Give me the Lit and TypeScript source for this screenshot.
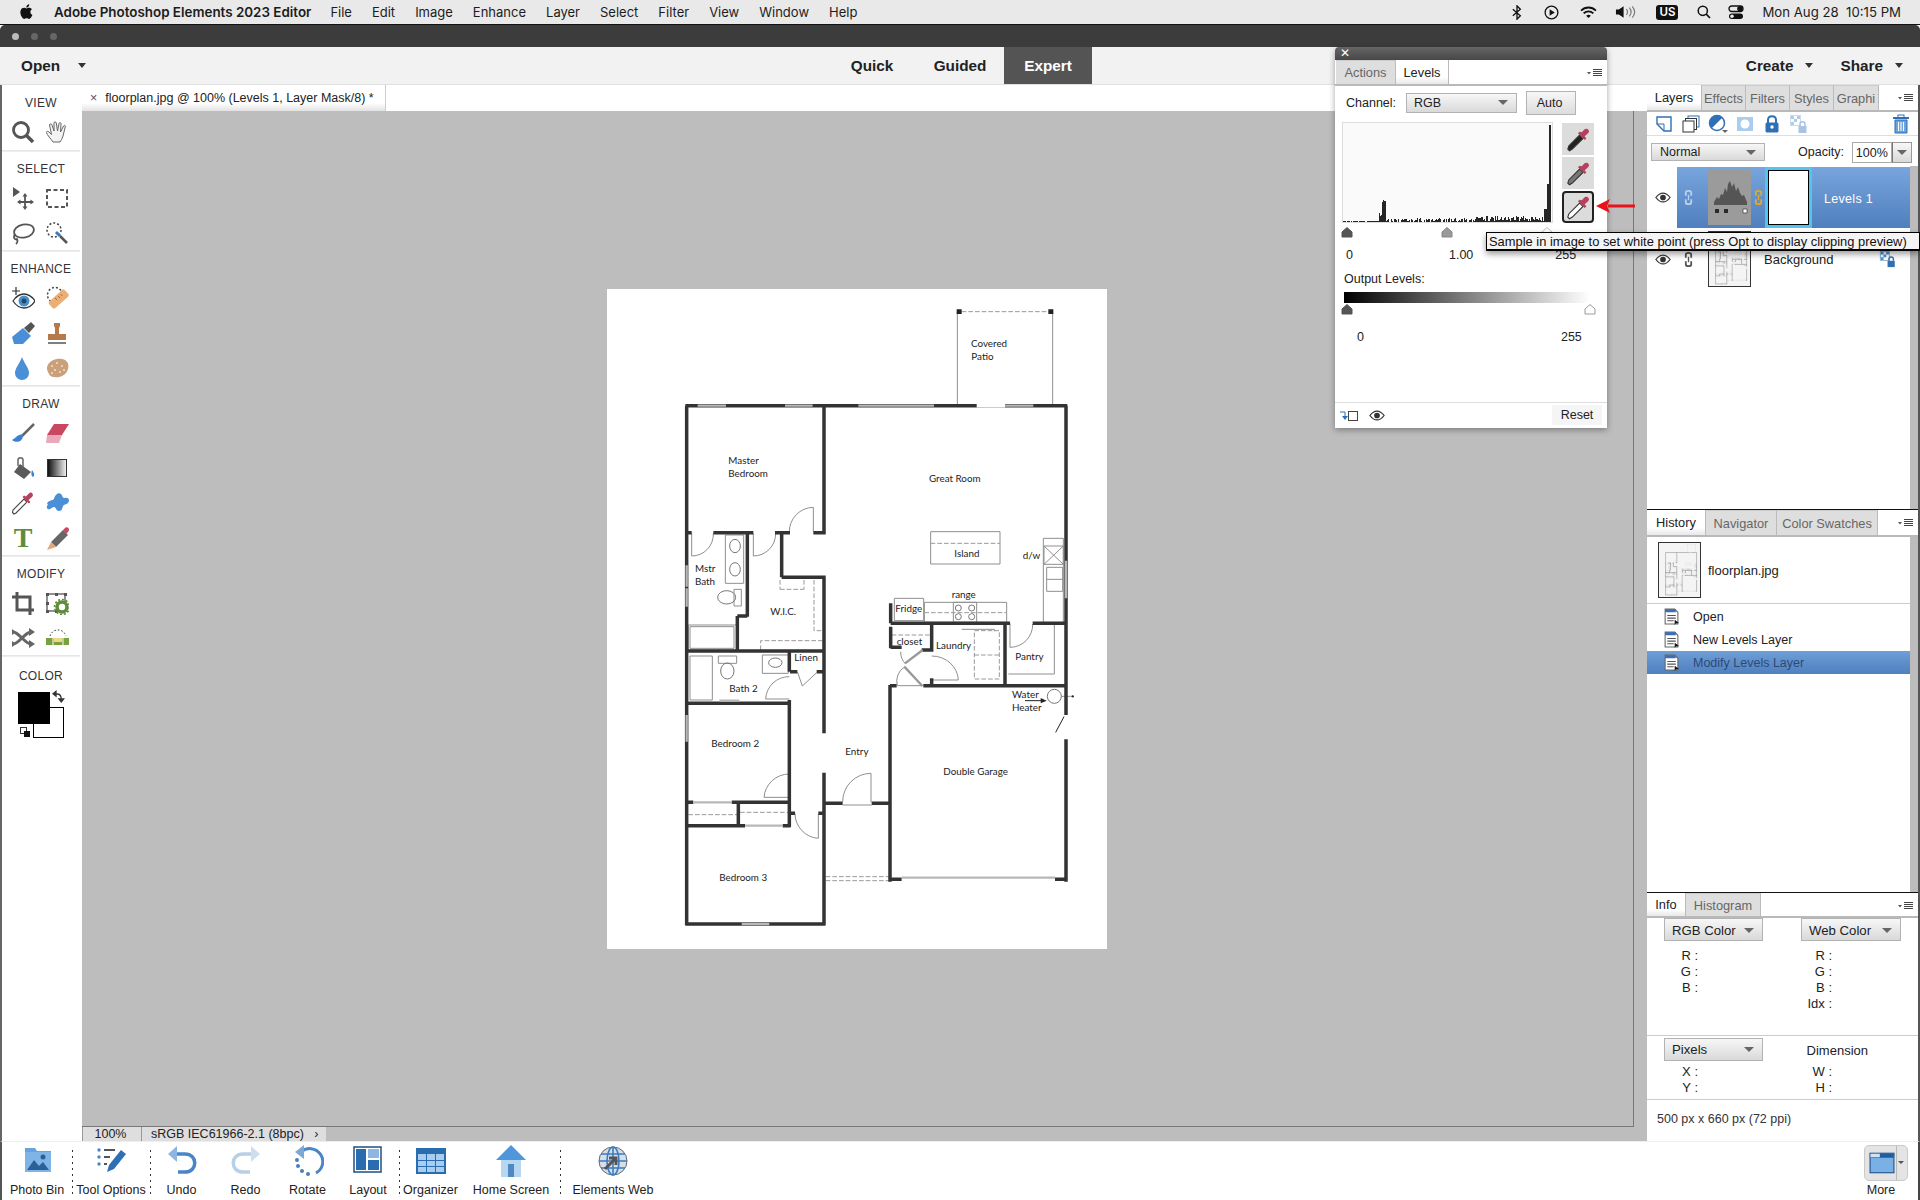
import { LitElement, html, css, svg } from "lit";
import { customElement } from "lit/decorators.js";

const W = "M76 347H1222M80 347V1906M76 1902H496M492 347V732M460 728H497M84 728H95M160 728H280M345 728H390M262 728V980M232 978H262M232 978V1083M365 728V862M365 862H497M492 862V1330M492 1448V1906M80 1083H492M388 1085V1145M390 1145H412M470 1145H492M388 1230V1530M80 1240H388M80 1537H100M215 1537H392M388 1525V1610M235 1537V1605M80 1607H255M368 1607H392M392 1570H405M475 1570H490M492 1540H548M635 1540H690M690 1185V1775M690 1187H710M790 1187H1222M1218 347V1275M1218 1348V1775M690 1768H725M1185 1768H1222M692 940V1000M692 1000H1050M1118 1000H1222M692 1010V1075M692 1072H725M815 1005V1085M785 1080H815M1035 1000V1187M815 1165V1187";
const THIN = "M892 65V345M1178 65V345M460 725V652A73 73 0 0 0 388 725M95 728V798A65 65 0 0 0 160 730M280 730V798A67 67 0 0 0 347 730M1050 1000V1072A68 68 0 0 0 1118 1002M388 1160A70 70 0 0 0 317 1227H388M388 1452A76 76 0 0 0 312 1522H388M405 1570A75 75 0 0 0 475 1645V1572M633 1537V1450A85 85 0 0 0 548 1535M548 1545H635M815 1098A80 75 0 0 1 895 1170H815M412 1145L427 1188L470 1148M722 1085A50 50 0 0 0 737 1122M735 1130A50 50 0 0 0 712 1187H790M1204 1219H1232M1150 745H1210V1000H1150ZM1152 768H1210V823H1152ZM1152 768L1210 823M1210 768L1152 823M1160 832H1208V904H1160ZM1160 868H1208M812 725H1020V822H812ZM793 937H1040V997H793ZM880 937H950V997H880ZM703 925H791V992H703ZM196 735H251V880H196ZM222 898H244V948H222ZM90 1010H222V1075H90ZM85 1005H230V1080H85ZM90 1098H157V1230H90ZM175 1098H230V1120H175ZM307 1095H385V1150H307ZM1183 1002V1152H1045M905 1018H1003V1024";
const DASH = "M905 65H1165M812 760H1020M793 968H1038M360 898H432M432 870V898M360 870V898M462 870V1022H490M302 1080V1052H488M943 1022H1018V1167H943ZM943 1095H1018M695 1035H810M85 1574H232M240 1567H385M497 1760H690M497 1772H690";
const WIN = "M113 347H198M375 347H458M595 347H822M1035 347H1120M80 895V950M80 1275V1355M80 826V890M245 1902H328M178 1232H238M100 1537H215M255 1607H368M725 1763H1185M1218 812V925";

const LABELS: [string, number, number][] = [["Covered",933,170],["Patio",934,209],["Master",205,522],["Bedroom",205,560],["Great Room",807,575],["Island",883,800],["d/w",1088,808],["range",875,923],["Fridge",706,966],["closet",710,1064],["Laundry",828,1076],["Pantry",1066,1110],["Mstr",105,845],["Bath",105,886],["W.I.C.",331,974],["Linen",403,1112],["Bath 2",208,1205],["Water",1056,1223],["Heater",1056,1262],["Bedroom 2",154,1370],["Entry",556,1395],["Double Garage",850,1455],["Bedroom 3",178,1773]];

const planShapes = (detail: boolean) => svg`
  <path d=${THIN} fill="none" stroke="#8f8f8f" stroke-width="3"/>
  <path d=${DASH} fill="none" stroke="#999" stroke-width="3" stroke-dasharray="14 6"/>
  <g fill="none" stroke="#777" stroke-width="3">
    <ellipse cx="225" cy="768" rx="16" ry="20"/><ellipse cx="225" cy="838" rx="16" ry="20"/>
    <ellipse cx="200" cy="922" rx="27" ry="20"/><ellipse cx="202" cy="1143" rx="20" ry="24"/>
    <ellipse cx="346" cy="1118" rx="20" ry="14"/><circle cx="1183" cy="1219" r="21"/>
    <circle cx="895" cy="954" r="9"/><circle cx="935" cy="954" r="9"/><circle cx="895" cy="980" r="9"/><circle cx="935" cy="980" r="9"/>
  </g>
  <path d=${W} fill="none" stroke="#333" stroke-width="10.500"/>
  <path d=${WIN} fill="none" stroke="#b8b8b8" stroke-width="7"/>
  <path d="M735 1120L788 1080M733 1130L787 1188" fill="none" stroke="#999" stroke-width="7"/>
  <path d="M950 347H1035" stroke="#fff" stroke-width="11"/>
  <path d="M1212 1280L1187 1327M1095 1232H1150" stroke="#222" stroke-width="3"/>
  <path d="M1142 1224L1160 1232L1142 1240Z" fill="#222"/>
  <path d="M890 58H905V72H890ZM1165 58H1180V72H1165Z" fill="#222"/>
  <circle cx="1238" cy="1219" r="3.500" fill="#222"/>
  ${detail ? LABELS.map(([t, x, y]) => svg`<text x=${x} y=${y}>${t}</text>`) : ""}
`;

function histPath(w: number, h: number): string {
  let seed = 17;
  const r = () => (seed = (seed * 137 + 59) % 1009) / 1009;
  let d = "";
  for (let i = 0; i < w; i++) {
    const t = i / w;
    let v = 0;
    if (t < 0.17) v = r() < 0.8 ? 1 : 0;
    else if (t < 0.185) v = 4 + r() * 6;
    else if (t < 0.205) v = 19 + r() * 3;
    else if (t < 0.62) v = r() < 0.72 ? 1 + r() * 3 : 0;
    else if (t < 0.96) v = 1 + r() * 5;
    else if (t < 0.975) v = 13;
    else if (t < 0.985) v = 38;
    else if (t < 0.995) v = h - 2;
    d += `M${i + 0.5} ${h}V${h - Math.round(v)}`;
  }
  return d;
}

const dropper = (c: string) => html`<svg viewBox="0 0 24 24" width="27" height="27">
  <path d="M4 22L2.500 20.500 3.500 17.500 13 8 16 11 6.500 20.500Z" fill=${c} stroke="#333" stroke-width="1"/>
  <path d="M11.500 6.500L17.500 12.500 19 11 17.500 9 20.500 6.500C22.500 4.500 20.500 2 18.500 2.500 17 3 16.500 4 15 5.500L13 5Z" fill="#b5415f"/>
</svg>`;
const eye = () => html`<svg viewBox="0 0 18 12" width="16" height="11"><path d="M1 6C4 2 6.500 1 9 1s5 1 8 5c-3 4-5.500 5-8 5S4 10 1 6Z" fill="#fff" stroke="#333" stroke-width="1.400"/><circle cx="9" cy="6" r="3.200" fill="#333"/></svg>`;
const link = (c: string) => html`<svg viewBox="0 0 10 18" width="9" height="17"><path d="M2 7V3.500C2 1 8 1 8 3.500V7M2 11V14.500C2 17 8 17 8 14.500V11" fill="none" stroke=${c} stroke-width="2"/><path d="M5 6V12" stroke=${c} stroke-width="1.500"/></svg>`;
const pm = () => html`<svg class="pm" viewBox="0 0 16 8" width="16" height="8"><path d="M0 3H4L2 5.500Z" fill="#555"/><path d="M6 .5H15M6 2.500H15M6 4.500H15M6 6.500H15" stroke="#444"/></svg>`;
const histIcon = () => html`<svg viewBox="0 0 14 16" width="15" height="17"><path d="M1 1H10L13 4V15H1Z" fill="#fff" stroke="#666"/><path d="M1 1H11V4H1Z" fill="#3e6eb0"/><path d="M3 7H11M3 9.500H11M3 12H9" stroke="#555"/><path d="M10 11L14 14 11 14.500 10 16Z" fill="#111"/></svg>`;
const thumb = () => html`<svg class="fthumb2" viewBox="-159 -3 1500 1980" preserveAspectRatio="xMidYMid meet">${planShapes(false)}</svg>`;

const TOOLS: Record<string, unknown> = {
  zoom: svg`<circle cx="10" cy="10" r="7.500" fill="none" stroke="#555" stroke-width="2.800"/><path d="M15 15L22 22" stroke="#555" stroke-width="3.500"/>`,
  hand: svg`<path d="M8 22C6 19 2 15 1.500 12.500c0-1.500 1.500-1.500 2.500-.5l2.500 2.500L4.500 5c0-1.500 2-1.500 2.500 0L9 11 9 3c0-1.500 2-1.500 2.300 0L12.500 11 14 3.500c.3-1.500 2.200-1 2 .5L15.500 12 18.500 6c.7-1.200 2.200-.6 1.800.7L18 16c-1 3-2 4.500-3 6Z" fill="#f3f3f3" stroke="#666" stroke-width="1"/>`,
  move: svg`<path d="M2 1V11L9 6Z" fill="#555"/><path d="M14 9V22M8 16H21" stroke="#555" stroke-width="1.800"/><path d="M14 7L11.500 10.500H16.500ZM14 24L11.500 20.500H16.500ZM6 16L9.500 13.500V18.500ZM23 16L19.500 13.500V18.500Z" fill="#555"/>`,
  marquee: svg`<rect x="2" y="4" width="20" height="17" fill="none" stroke="#555" stroke-width="2" stroke-dasharray="4 2.500"/>`,
  lasso: svg`<ellipse cx="13" cy="10" rx="10" ry="6.500" transform="rotate(-12 13 10)" fill="none" stroke="#555" stroke-width="1.800"/><path d="M4 13C2 16 3 19 6 18 7 20 6 22 5 23" fill="none" stroke="#555" stroke-width="1.800"/>`,
  wand: svg`<circle cx="9" cy="9" r="7" fill="none" stroke="#444" stroke-width="1.500" stroke-dasharray="2 2"/><path d="M11 11L15 15" stroke="#3b78c4" stroke-width="3"/><path d="M15 15L22 22" stroke="#555" stroke-width="2.500"/>`,
  redeye: svg`<path d="M5 1V9M1 5H9" stroke="#333" stroke-width="1.200"/><path d="M2 15C6 9 10 8 13 8s7 1 11 7c-4 6-8 7-11 7S6 21 2 15Z" fill="#fff" stroke="#333" stroke-width="1.300"/><circle cx="13" cy="15" r="5.500" fill="#4b8fc9"/><circle cx="13" cy="15" r="2.500" fill="#1e4a74"/>`,
  heal: svg`<circle cx="10" cy="9" r="7.500" fill="none" stroke="#444" stroke-width="1.500" stroke-dasharray="2 2"/><rect x="3" y="9" width="21" height="9" rx="2" transform="rotate(-42 13 13)" fill="#ecae74"/><path d="M10 12l2 2M13 10l2 2M15.500 8l2 2" stroke="#b56b33" stroke-width="1"/>`,
  smart: svg`<path d="M12 7L20 15 12 23 3 23 1 16Z" fill="#4b8ed8"/><path d="M13 7L18 12 24 5 20 1Z" fill="#555"/>`,
  stamp: svg`<path d="M9 2H15V5L14 7V13H10V7L9 5Z" fill="#b5794a"/><path d="M3 13H21V19H3Z" fill="#b5794a"/><path d="M3 22H21" stroke="#555" stroke-width="1.500"/>`,
  blur: svg`<path d="M11 1C9 7 4 12 4 17a7 7 0 0 0 14 0C18 12 13 7 11 1Z" fill="#4b8fd6"/>`,
  sponge: svg`<path d="M3 16C0 11 4 4 12 3c8-1 13 3 11 10-2 7-9 9-14 8-3 0-5-2-6-5Z" fill="#c9a07a"/><g fill="#efe1cf"><circle cx="7" cy="10" r="1"/><circle cx="12" cy="7" r="1"/><circle cx="17" cy="10" r="1"/><circle cx="10" cy="14" r="1"/><circle cx="15" cy="16" r="1"/><circle cx="7" cy="17" r="1"/><circle cx="19" cy="14" r="1"/></g>`,
  brush: svg`<path d="M11 15L23 3" stroke="#666" stroke-width="2.500"/><path d="M12 14C8 12 5 17 1 19c3 3 11 3 11-5Z" fill="#3a81d1"/>`,
  eraser: svg`<path d="M9 3H24L17 14H2Z" fill="#c9475f"/><path d="M2 14H17L14 22H1Z" fill="#e9a9b8"/>`,
  bucket: svg`<path d="M9 8L20 16 13 23 3 16Z" fill="#5a5a5a"/><path d="M7 10V4C7 1 12 1 12 4V12" fill="none" stroke="#666" stroke-width="1.500"/><path d="M21 14C23 17 24 19 22 21 20 20 20 17 21 14Z" fill="#3a81d1"/>`,
  gradient: html``,
  dropper: svg`<path d="M3 23L1.500 21.500 2 19 13 8 16 11 5 22Z" fill="#fff" stroke="#444" stroke-width="1.100"/><path d="M11.500 6L18 12.500 19.500 11 17.500 9 21 6C23 4 21.500 1.500 19.500 1.500 18.500 1.500 18 2.500 15 5.500L13 4.500Z" fill="#b5415f"/>`,
  shape: svg`<path d="M2 13C3 9 7 10 9 8 10 4 13 1 16 3c2 2 1 4 4 4 4-1 5 3 3 5-2 2-4 1-5 3-1 3-1 5-4 5-3 0-3-4-5-4-2 0-3 3-6 2-2-1-1-3 0-5Z" fill="#4b8fd6"/>`,
  text: html``,
  pencil: svg`<path d="M6 16L18 4 23 9 11 21Z" fill="#666"/><path d="M18 4L20 2C21 1 23 1 24 3 24 4 24 5 23 6L21 8Z" fill="#c9475f"/><path d="M6 16L11 21 2 24Z" fill="#e3a877"/>`,
  crop: svg`<path d="M6 1V19H23M1 6H19V24" fill="none" stroke="#555" stroke-width="3"/>`,
  recompose: svg`<rect x="2" y="3" width="18" height="17" fill="none" stroke="#555" stroke-width="1.300"/><g fill="#555"><rect x="1" y="2" width="3" height="3"/><rect x="10" y="2" width="3" height="3"/><rect x="19" y="2" width="3" height="3"/><rect x="1" y="11" width="3" height="3"/><rect x="1" y="19" width="3" height="3"/><rect x="10" y="19" width="3" height="3"/></g><circle cx="17" cy="16" r="5" fill="#fff" stroke="#5d8c3a" stroke-width="3.500"/><circle cx="17" cy="16" r="7.500" fill="none" stroke="#5d8c3a" stroke-width="1.600" stroke-dasharray="2 1.900"/>`,
  camove: svg`<path d="M2 6C8 6 14 18 20 18M2 18C8 18 14 6 20 6" fill="none" stroke="#666" stroke-width="3"/><path d="M18 2V10L24 6ZM18 14V22L24 18ZM1 3L1 9 5 6ZM1 15V21L5 18Z" fill="#666"/>`,
  straight: svg`<rect x="1" y="12" width="24" height="7" fill="#7ba03f"/><path d="M8 12V19M18 12V19" stroke="#fff"/><rect x="9" y="12" width="8" height="4" fill="#f3d77c"/><path d="M5 10C7 5 10 4 13 4s6 1 8 6" fill="none" stroke="#333" stroke-dasharray="1.500 2"/>`,
};

const BOTTOM: Record<string, unknown> = {
  bin: svg`<path d="M4 3H14L16 6H30V27H4Z" fill="#6aa3dc"/><path d="M4 7H30V27H4Z" fill="#7fb4e6"/><path d="M6 25L13 15 18 21 22 17 28 25Z" fill="#2a6098"/><circle cx="22" cy="12" r="2.500" fill="#2a6098"/>`,
  opts: svg`<g fill="#4c85c4"><circle cx="4" cy="5" r="1.700"/><circle cx="4" cy="12" r="1.700"/><circle cx="4" cy="19" r="1.700"/></g><path d="M9 5H20M9 12H15M9 19H12" stroke="#555" stroke-width="2"/><path d="M14 20L26 5 31 9 19 24 12 27Z" fill="#2f6fb5"/>`,
  undo: svg`<path d="M9 9H19C32 9 32 27 19 27H12" fill="none" stroke="#4a86c5" stroke-width="3.500"/><path d="M11 1V17L2 9Z" fill="#8db7e0"/>`,
  redo: svg`<path d="M23 9H13C0 9 0 27 13 27H20" fill="none" stroke="#b9cfe5" stroke-width="3.500"/><path d="M21 1V17L30 9Z" fill="#cfdeee"/>`,
  rotate: svg`<path d="M9 7A13 13 0 1 1 24 28" fill="none" stroke="#4a86c5" stroke-width="3"/><path d="M12 0V14L3 7Z" fill="#7fa9d5"/><g fill="#4a7fb8"><circle cx="5" cy="15" r="2"/><circle cx="6" cy="21" r="2"/><circle cx="10" cy="26" r="2"/><circle cx="16" cy="29" r="2"/></g>`,
  layout: svg`<rect x="2" y="2" width="27" height="25" fill="#fff" stroke="#1f4f86" stroke-width="1.500"/><rect x="4" y="4" width="10" height="21" fill="#2a6cb0"/><rect x="16" y="4" width="11" height="9" fill="#8db7e0"/><rect x="16" y="15" width="11" height="10" fill="#2a6cb0"/>`,
  org: svg`<rect x="1" y="3" width="30" height="26" fill="#2a6cb0"/><g fill="#a9cdef"><rect x="3" y="9" width="8" height="6"/><rect x="12" y="9" width="8" height="6"/><rect x="21" y="9" width="8" height="6"/><rect x="3" y="16" width="8" height="5"/><rect x="12" y="16" width="8" height="5"/><rect x="21" y="16" width="8" height="5"/><rect x="3" y="22" width="8" height="5"/><rect x="12" y="22" width="8" height="5"/><rect x="21" y="22" width="8" height="5"/></g>`,
  home: svg`<path d="M16 0L31 15H1Z" fill="#4f97da"/><rect x="6" y="15" width="20" height="17" fill="#b7d6f2"/><rect x="13" y="19" width="6" height="13" fill="#4f89c4"/>`,
  web: svg`<circle cx="16" cy="16" r="14" fill="#d5dfea" stroke="#666" stroke-width="1"/><g fill="none" stroke="#3d7cc0" stroke-width="1.600"><ellipse cx="16" cy="16" rx="6" ry="14"/><path d="M16 2V30M2 16H30M4 9H28M4 23H28"/></g><path d="M8 24L18 14M12 13H19V20" fill="none" stroke="#555" stroke-width="3"/>`,
};
const BOTTOM_ITEMS: [string, string, string][] = [
  ["bin", "Photo Bin", ""], ["opts", "Tool Options", "sep"], ["undo", "Undo", "sep"], ["redo", "Redo", ""],
  ["rotate", "Rotate", ""], ["layout", "Layout", ""], ["org", "Organizer", "sep"], ["home", "Home Screen", ""], ["web", "Elements Web", "sep"],
];
const GROUPS: [string, string[]][] = [
  ["VIEW", ["zoom", "hand"]],
  ["SELECT", ["move", "marquee", "lasso", "wand"]],
  ["ENHANCE", ["redeye", "heal", "smart", "stamp", "blur", "sponge"]],
  ["DRAW", ["brush", "eraser", "bucket", "gradient", "dropper", "shape", "text", "pencil"]],
  ["MODIFY", ["crop", "recompose", "camove", "straight"]],
];

@customElement("app-root")
export class AppRoot extends LitElement {
  static styles = css`
    :host { display: block; width: 1920px; height: 1200px; overflow: hidden; position: relative; font: 12.5px "Liberation Sans", Arial, sans-serif; color: #222; background: #fff; }
    .root { width: 1920px; height: 1200px; display: flex; flex-direction: column; }
    .menubar { height: 24px; flex: none; background: #e9e9e9; border-bottom: 1px solid #111; display: flex; align-items: center; padding-left: 19px; font: 13px Inter, sans-serif; color: #1c1c1c; box-sizing: content-box; }
    .menubar b { font-weight: 600; margin: 0 19px 0 19px; font-size: 13.4px; white-space: nowrap; }
    .menus { display: flex; gap: 20px; }
    .status-icons { margin-left: auto; display: flex; align-items: center; padding-right: 19px; }
    .status-icons svg { display: block; }
    .si { display: flex; justify-content: center; }
    .s1 { width: 33px; }
    .s2 { width: 36px; }
    .s3 { width: 38px; }
    .s4 { width: 36px; }
    .us { background: #111; color: #fff; font-size: 11.500px; font-weight: 600; border-radius: 3px; width: 22px; height: 15px; display: flex; align-items: center; justify-content: center; margin: 0 19px 0 13px; }
    .ctl { margin-left: 17px; }
    .clock { margin-left: 18px; white-space: pre; font-size: 13.200px; }
    .title { height: 22px; flex: none; background: #3c3c3c; display: flex; align-items: center; gap: 12px; padding-left: 12px; border-radius: 5px 5px 0 0; }
    .title i { width: 7px; height: 7px; border-radius: 50%; background: #666; }
    .title i:first-child { background: #bbb; }
    .top { height: 37px; flex: none; background: #f2f2f2; display: grid; grid-template-columns: 1fr auto 1fr; align-items: stretch; font: bold 15.300px "Liberation Sans", sans-serif; color: #222; border-bottom: 1px solid #e0e0e0; }
    .top .l { display: flex; align-items: center; padding-left: 21px; }
    .top .c { display: grid; grid-template-columns: 88px 88px 88px; }
    .top .c span { display: flex; align-items: center; justify-content: center; }
    .top .c .on { background: #545454; color: #fff; }
    .top .r { display: flex; align-items: center; justify-content: flex-end; padding-right: 17px; }
    .caret { display: inline-block; width: 0; height: 0; border: 4px solid transparent; border-top: 5px solid #333; border-bottom: 0; }
    .top .l .caret { margin-left: 18px; }
    .top .r .caret { margin-left: 12px; }
    .top .r .share { margin-left: 27px; }
    .main { flex: 1; display: flex; min-height: 0; }
    .tools { width: 80px; flex: none; background: #fff; border-left: 2px solid #666; box-sizing: border-box; display: flex; flex-direction: column; margin-right: 2px; }
    .grp { border-bottom: 1px solid #e6e6e6; border-top: 1px solid #eee; padding-top: 10px; flex: none; }
    .grp:first-child { border-top: 0; padding-top: 11px; }
    .grp:last-child { border-bottom: 0; padding-top: 12px; }
    .grp h4 { margin: 0 0 5px; height: 14px; font: 12px/14px "Liberation Sans", sans-serif; text-align: center; color: #333; letter-spacing: .3px; }
    .grid2 { display: grid; grid-template-columns: 34px 34px; grid-auto-rows: 34.700px; margin-left: 4px; align-items: center; justify-items: center; }
    .grid2 svg { width: 24px; height: 24px; display: block; }
    .t-big { font: bold 28px/24px "Liberation Serif", serif; color: #5d8c3a; }
    .grad { width: 20px; height: 18px; border: 1px solid #333; background: linear-gradient(90deg, #111, #eee); box-sizing: border-box; }
    .swatch { position: relative; height: 60px; margin: 9px 0 0 16px; }
    .swatch .fg { position: absolute; left: 0; top: 0; width: 32px; height: 32px; background: #000; z-index: 1; }
    .swatch .bg { position: absolute; left: 15px; top: 15px; width: 31px; height: 31px; background: #fff; border: 1px solid #000; box-sizing: border-box; }
    .swatch svg { position: absolute; }
    .sw1 { left: 34px; top: -2px; }
    .sw2 { left: 2px; top: 35px; }
    .center { width: 1565px; flex: none; display: flex; flex-direction: column; background: #bdbdbd; }
    .tabrow { height: 26px; flex: none; background: #fff; display: flex; }
    .doc { width: 304px; background: linear-gradient(#fff 70%, #e2e2e2); border-right: 1px solid #ccc; display: flex; align-items: center; box-sizing: border-box; padding: 0 0 1px 8px; font-size: 12.500px; color: #222; }
    .doc em { font-style: normal; margin-right: 8px; color: #555; }
    .canvas { flex: 1; display: flex; align-items: center; justify-content: center; border-right: 1px solid #777; border-bottom: 1px solid #777; margin-right: 13px; padding-right: 2px; min-height: 0; }
    .plan { width: 500px; height: 660px; background: #fff; display: block; }
    .plan text { font: 29.500px Lato, sans-serif; fill: #1c1c1c; }
    .status { height: 14px; flex: none; display: flex; font-size: 12.500px; line-height: 15px; color: #222; }
    .status span { background: #dedede; border-left: 1px solid #999; box-sizing: border-box; overflow: hidden; }
    .status .a { width: 59px; text-align: center; padding-right: 3px; }
    .status .b { width: 185px; padding-left: 9px; white-space: nowrap; }
    .panels { flex: 1; min-width: 0; display: flex; flex-direction: column; background: #fff; border-right: 2px solid #555; box-sizing: border-box; width: 273px; }
    .ptabs { height: 25px; flex: none; display: flex; align-items: stretch; border-bottom: 2px solid #b9b9b9; position: relative; font-size: 12.800px; color: #666; box-sizing: content-box; }
    .ptabs span { background: #dedede; border-right: 1px solid #bbb; border-top: 1px solid #ccc; display: flex; align-items: center; justify-content: center; overflow: hidden; white-space: nowrap; box-sizing: border-box; }
    .ptabs .on { background: linear-gradient(#fff 70%, #e8e8e8); color: #222; border-top: 0; }
    .tl { width: 55px; } .te { width: 44px; } .tg { width: 45px; }
    .th { width: 59px; } .tn { width: 71px; } .tc { width: 101px; }
    .ti { width: 39px; } .tm { width: 75px; }
    .ta { width: 60px; margin-left: 1px; } .tv { width: 53px; }
    .pm { position: absolute; right: 4px; top: 9px; }
    .layers { height: 424px; flex: none; display: flex; flex-direction: column; border-bottom: 1px solid #111; }
    .licons { height: 23px; flex: none; display: flex; align-items: center; gap: 7px; padding: 0 7px 0 7px; border-bottom: 1px solid #ddd; }
    .licons svg { width: 20px; height: 20px; display: block; }
    .licons .trash { margin-left: auto; margin-right: 0; }
    .blend { height: 28px; padding-top: 2px; flex: none; display: flex; align-items: center; padding-left: 4px; }
    .dd { background: linear-gradient(#f7f7f7, #d9d9d9); border: 1px solid #b3b3b3; box-sizing: border-box; display: flex; align-items: center; padding: 0 8px; color: #222; }
    .dd::after { content: ""; margin-left: auto; border: 5px solid transparent; border-top: 5px solid #666; border-bottom: 0; }
    .blend .dd { width: 114px; height: 18px; }
    .op { margin-left: 33px; font-size: 12.500px; margin-right: 8px; }
    .opv { width: 40px; height: 21px; border: 1px solid #aaa; box-sizing: border-box; padding-left: 3px; line-height: 20px; }
    .opb { width: 20px; height: 21px; border: 1px solid #999; border-left: 1px solid #777; box-sizing: border-box; background: linear-gradient(#f7f7f7, #d9d9d9); display: flex; align-items: center; justify-content: center; }
    .opb::after { content: ""; border: 5px solid transparent; border-top: 5px solid #666; border-bottom: 0; }
    .list { flex: 1; display: flex; min-height: 0; }
    .rows { flex: 1; min-width: 0; }
    .scroll { width: 8px; flex: none; background: #bcbcbc; }
    .lrow { display: flex; align-items: center; height: 62px; }
    .lrow .e { width: 30px; padding-left: 8px; box-sizing: border-box; flex: none; display: flex; }
    .lrow .ln { width: 31px; flex: none; display: flex; justify-content: center; padding-right: 8px; box-sizing: border-box; }
    .sel { flex: 1; height: 61px; display: flex; align-items: center; background: linear-gradient(#78a5dc, #4f7fbd); color: #fff; }
    .sel .ln { width: 31px; flex: none; display: flex; justify-content: center; padding-right: 8px; }
    .lt { width: 43px; height: 56px; flex: none; background: #9b9b9b; display: block; }
    .chain { margin: 0 2px 0 3px; display: flex; }
    .mask { width: 47px; height: 61px; box-sizing: border-box; border: 3px solid #53c3ef; outline: 1px solid #000; outline-offset: -4px; background: #fff; }
    .sel .nm { margin-left: 12px; font-size: 12.500px; letter-spacing: .3px; padding-top: 3px; }
    .fthumb { width: 43px; height: 56px; border: 1px solid #333; box-sizing: border-box; background: #f4f4f4; flex: none; }
    .fthumb2 { width: 100%; height: 100%; display: block; }
    .bgrow .nm { margin-left: 13px; color: #222; font-size: 13px; padding-top: 1px; }
    .bgrow .lock { margin-left: auto; margin-right: 13px; }
    .history { height: 383px; flex: none; display: flex; flex-direction: column; border-bottom: 1px solid #111; box-sizing: border-box; }
    .hbody { flex: 1; display: flex; min-height: 0; }
    .hlist { flex: 1; min-width: 0; }
    .snap { height: 66px; display: flex; align-items: center; border-bottom: 1px solid #ccc; padding-left: 11px; gap: 7px; font-size: 13px; }
    .hthumb { width: 43px; height: 56px; border: 1px solid #333; box-sizing: border-box; background: #f4f4f4; flex: none; }
    .hrow { height: 23px; display: flex; align-items: center; padding-left: 17px; gap: 14px; font-size: 12.500px; }
    .hrows { padding-top: 1px; }
    .hrow svg { display: block; flex: none; }
    .hrow.on { background: linear-gradient(#6f9fd8, #4f7fbd); color: #2d4a73; }
    .info { flex: 1; display: flex; flex-direction: column; min-height: 0; font-size: 13px; }
    .ptabs.inf { height: 23px; }
    .icols { display: grid; grid-template-columns: 134px 134px; }
    .icols .dd { height: 23px; width: 99px; margin-left: 17px; margin-top: 0; font-size: 13.200px; padding: 1px 8px 0 7px; }
    .icols > div + div .dd { margin-left: 20px; width: 100px; }
    .kv { width: 51px; text-align: right; height: 16.300px; line-height: 16px; white-space: nowrap; }
    .kvs { margin-top: 6.500px; }
    .dimen { text-align: right; width: 87px; height: 23px; line-height: 26px; }
    .idiv { border-top: 1px solid #ccc; }
    .d1 { margin-top: 22.300px; padding-top: 2px; }
    .d2 { margin-top: 2px; padding-top: 12px; font-size: 12.500px; color: #333; padding-left: 10px; }
    .kvs2 { margin-top: 3px; }
    .bottom { height: 59px; flex: none; background: #fff; border-top: 1px solid #eee; border-left: 2px solid #555; border-right: 2px solid #444; box-sizing: border-box; display: grid; grid-template-columns: 70px 78px 63px 65px 59px 62px 63px 98px 106px 1fr 54px; }
    .bi { display: flex; flex-direction: column; align-items: center; height: 58px; position: relative; }
    .bi svg { width: 32px; height: 32px; margin-top: 3px; display: block; flex: none; }
    .bi label { margin-top: 6px; white-space: nowrap; font-size: 12.500px; color: #222; }
    .bi.sep::before { content: ""; position: absolute; left: 0; top: 8px; height: 44px; width: 1px; background: repeating-linear-gradient(#333 0 2px, transparent 2px 6px); }
    .more { display: flex; flex-direction: column; align-items: flex-start; }
    .mbtn { width: 44px; height: 36px; margin-top: 3px; border-radius: 5px; background: #e4e4e4; border: 1px solid #c9c9c9; box-sizing: border-box; display: flex; align-items: center; position: relative; padding-left: 4px; }
    .mbtn svg { display: block; }
    .mbtn .car { position: absolute; right: 3px; top: 15px; border: 3px solid transparent; border-top: 3px solid #555; border-bottom: 0; }
    .mbtn::after { content: ""; position: absolute; right: 10px; top: 0; bottom: 0; border-left: 1px solid #b9b9b9; }
    .more label { margin-top: 2px; width: 34px; text-align: center; font-size: 12.500px; }

    .lv { position: absolute; left: 1335px; top: 47px; width: 272px; height: 381px; background: #fff; border-radius: 4px 4px 0 0; box-shadow: 0 2px 6px rgba(0,0,0,.35); display: flex; flex-direction: column; font-size: 12.500px; z-index: 5; }
    .lvh { height: 13px; background: linear-gradient(#666, #474747); border-radius: 4px 4px 0 0; color: #fff; font-size: 12px; line-height: 13px; padding-left: 5px; flex: none; }
    .lvt { height: 24px; }
    .lvb { flex: 1; display: flex; flex-direction: column; min-height: 0; }
    .chr { display: flex; align-items: center; height: 33px; padding-left: 11px; flex: none; }
    .chr .dd { width: 111px; height: 20px; margin-left: 10px; padding-left: 7px; }
    .auto { width: 50px; height: 24px; margin-left: 9px; padding-right: 3px; border: 1px solid #b3b3b3; background: linear-gradient(#f7f7f7, #dcdcdc); box-sizing: border-box; display: flex; align-items: center; justify-content: center; }
    .hr { display: flex; padding-left: 8px; margin-top: 4px; flex: none; }
    .hist { width: 209px; height: 99px; background: #fafafa; border: 1px solid #ddd; box-sizing: content-box; display: block; margin: -1px; }
    .drops { margin-left: 10px; display: grid; gap: 2px; grid-auto-rows: 32px; }
    .drops div { width: 32px; background: #dcdcdc; display: flex; align-items: center; justify-content: center; box-sizing: border-box; }
    .drops .on { border: 2px solid #222; border-radius: 4px; }
    .track { position: relative; height: 12px; margin-top: 4px; flex: none; }
    .track svg { position: absolute; top: 0; }
    .vals { display: flex; height: 16px; line-height: 16px; margin-top: 8px; padding-left: 11px; font-size: 12.500px; flex: none; }
    .v1 { margin-left: 96px; }
    .v2 { margin-left: 82px; }
    .ol { margin: 8px 0 0 9px; height: 16px; line-height: 16px; flex: none; }
    .gb { height: 11px; margin: 5px 17px 0 9px; background: linear-gradient(90deg, #000, #fff); flex: none; }
    .track2 { margin-top: 1px; }
    .vals2 { margin-top: 13px; padding-left: 22px; }
    .vals2 .v3 { margin-left: 197px; }
    .foot { margin-top: auto; height: 25px; border-top: 1px solid #ddd; display: flex; align-items: center; padding-left: 4px; position: relative; flex: none; }
    .foot .reset { position: absolute; right: 5px; top: 2px; width: 50px; height: 20px; background: #f5f5f5; display: flex; align-items: center; justify-content: center; }
    .foot svg { display: block; }
    .foot .e { margin-left: 10px; }
    .arrow { position: absolute; left: 1596px; top: 198px; z-index: 6; display: block; }
    .tip { position: absolute; left: 1486px; top: 232px; width: 434px; height: 19px; box-sizing: border-box; border: 1px solid #000; border-bottom-width: 2px; background: #f4f4f4; font-size: 12.900px; line-height: 17px; padding-left: 2px; white-space: nowrap; z-index: 7; box-shadow: 0 3px 6px rgba(0,0,0,.4); color: #111; }
  `;

  render() {
    const hist = histPath(209, 99);
    return html`<div class="root">
      <div class="menubar">
        <svg viewBox="0 0 24 24" width="16" height="16"><path fill="#111" d="M17.050 12.040c-.03-2.800 2.290-4.150 2.390-4.210-1.300-1.900-3.330-2.160-4.050-2.190-1.720-.17-3.360 1.020-4.230 1.020-.87 0-2.220-.99-3.650-.97-1.880.03-3.610 1.090-4.580 2.770-1.950 3.380-.5 8.390 1.400 11.140.93 1.340 2.040 2.850 3.490 2.800 1.400-.06 1.930-.91 3.620-.91 1.690 0 2.170.91 3.650.88 1.510-.03 2.460-1.370 3.380-2.720 1.070-1.560 1.510-3.070 1.530-3.150-.03-.02-2.930-1.130-2.960-4.460zM14.270 3.820c.77-.94 1.290-2.240 1.150-3.540-1.110.05-2.460.74-3.260 1.670-.71.83-1.340 2.160-1.170 3.430 1.240.1 2.500-.63 3.280-1.560z"/></svg>
        <b>Adobe Photoshop Elements 2023 Editor</b>
        <div class="menus">${["File","Edit","Image","Enhance","Layer","Select","Filter","View","Window","Help"].map((m) => html`<span>${m}</span>`)}</div>
        <div class="status-icons">
          <span class="si s1"><svg viewBox="0 0 12 18" width="10" height="15"><path d="M1 5L10 13 6 17V1L10 5 1 13" fill="none" stroke="#111" stroke-width="1.600"/></svg></span>
          <span class="si s2"><svg viewBox="0 0 16 16" width="15" height="15"><circle cx="8" cy="8" r="6.800" fill="none" stroke="#111" stroke-width="1.400"/><path d="M6 4.500L11.500 8 6 11.500Z" fill="#111"/></svg></span>
          <span class="si s3"><svg viewBox="0 0 18 14" width="17" height="13"><path d="M1 5C5.500 .5 12.500 .5 17 5M3.800 8C6.800 5 11.200 5 14.200 8" fill="none" stroke="#111" stroke-width="2"/><path d="M6.500 10.500C8 9 10 9 11.500 10.500L9 13Z" fill="#111"/></svg></span>
          <span class="si s4"><svg viewBox="0 0 22 14" width="21" height="14"><path d="M1 4.500H4L9 1V13L4 9.500H1Z" fill="#111"/><path d="M12 4C13.500 6 13.500 8 12 10M15 2.500C17.500 5.500 17.500 8.500 15 11.500M18 1C21.500 5 21.500 9 18 13" fill="none" stroke="#777" stroke-width="1.200"/></svg></span>
          <span class="us">US</span>
          <svg viewBox="0 0 14 14" width="14" height="14"><circle cx="5.800" cy="5.800" r="4.600" fill="none" stroke="#111" stroke-width="1.500"/><path d="M9.200 9.200L13 13" stroke="#111" stroke-width="1.700"/></svg>
          <svg class="ctl" viewBox="0 0 16 15" width="16" height="15"><rect x="1" y="1" width="14" height="5.500" rx="2.700" fill="none" stroke="#111" stroke-width="1.300"/><circle cx="12" cy="3.700" r="2.800" fill="#111"/><rect x="1" y="8.500" width="14" height="5.500" rx="2.700" fill="#111"/><circle cx="4" cy="11.200" r="1.800" fill="#e9e9e9"/></svg>
          <span class="clock">Mon Aug 28  10:15 PM</span>
        </div>
      </div>
      <div class="title"><i></i><i></i><i></i></div>
      <div class="top">
        <div class="l">Open<span class="caret"></span></div>
        <div class="c"><span>Quick</span><span>Guided</span><span class="on">Expert</span></div>
        <div class="r">Create<span class="caret"></span><span class="share">Share</span><span class="caret"></span></div>
      </div>
      <div class="main">
        <div class="tools">
          ${GROUPS.map(([g, items]) => html`<div class="grp"><h4>${g}</h4><div class="grid2">${items.map((n) =>
            n === "gradient" ? html`<div class="grad"></div>` :
            n === "text" ? html`<span class="t-big">T</span>` :
            html`<svg viewBox="0 0 24 24">${TOOLS[n]}</svg>`)}</div></div>`)}
          <div class="grp"><h4>COLOR</h4>
            <div class="swatch"><div class="fg"></div><div class="bg"></div>
              <svg class="sw1" viewBox="0 0 14 14" width="13" height="13"><path d="M3 5C8 3 10 6 10 10" fill="none" stroke="#333" stroke-width="1.500"/><path d="M0 4L5 0V8ZM6 9H14L10 14Z" fill="#333"/></svg>
              <svg class="sw2" viewBox="0 0 10 10" width="10" height="10"><rect x=".5" y=".5" width="6" height="6" fill="#fff" stroke="#333"/><rect x="4" y="4" width="6" height="6" fill="#111"/></svg>
            </div>
          </div>
        </div>
        <div class="center">
          <div class="tabrow"><div class="doc"><em>×</em>floorplan.jpg @ 100% (Levels 1, Layer Mask/8) *</div></div>
          <div class="canvas">
            <svg class="plan" viewBox="-159 -3 1500 1980">${planShapes(true)}</svg>
          </div>
          <div class="status"><span class="a">100%</span><span class="b">sRGB IEC61966-2.1 (8bpc)&nbsp;&nbsp;&nbsp;›</span></div>
        </div>
        <div class="panels">
          <div class="layers">
            <div class="ptabs">
              <span class="on tl">Layers</span><span class="te">Effects</span><span class="te">Filters</span><span class="te">Styles</span><span class="tg">Graphi</span>${pm()}
            </div>
            <div class="licons">
              <svg viewBox="0 0 20 20"><path d="M3 3H17V17H10L3 10Z" fill="#fff" stroke="#2f6fb5" stroke-width="1.400"/><path d="M3 10L10 10 10 17" fill="none" stroke="#2f6fb5"/></svg>
              <svg viewBox="0 0 20 20"><rect x="7" y="2" width="11" height="11" fill="#fff" stroke="#2f6fb5"/><rect x="4.500" y="4.500" width="11" height="11" fill="#fff" stroke="#333"/><rect x="2" y="7" width="11" height="11" fill="#fff" stroke="#333"/></svg>
              <svg viewBox="0 0 20 20"><circle cx="9" cy="9" r="7.500" fill="#fff" stroke="#2f6fb5" stroke-width="1.500"/><path d="M14.300 3.700A7.500 7.500 0 0 0 3.700 14.300Z" fill="#2f6fb5"/><path d="M14 16H20L17 19Z" fill="#666"/></svg>
              <svg viewBox="0 0 20 20"><rect x="2" y="3" width="16" height="14" fill="#a9cdef"/><circle cx="10" cy="10" r="4.500" fill="#fff"/></svg>
              <svg viewBox="0 0 20 20"><path d="M6 9V6C6 1 14 1 14 6V9" fill="none" stroke="#2f6fb5" stroke-width="2"/><rect x="3.500" y="8.500" width="13" height="10" rx="1.500" fill="#2f6fb5"/><circle cx="10" cy="13" r="1.700" fill="#fff"/></svg>
              <svg viewBox="0 0 20 20"><path d="M2 2H5V5H2ZM8 2H11V5H8ZM5 5H8V8H5ZM2 8H5V11H2Z" fill="#a9cdef"/><rect x="1.500" y="1.500" width="10" height="10" fill="none" stroke="#cbdcee"/><path d="M11 12V10C11 7 16 7 16 10V12" fill="none" stroke="#a9c4e2" stroke-width="1.500"/><rect x="9.500" y="12" width="8" height="7" fill="#a9c4e2"/></svg>
              <svg class="trash" viewBox="0 0 20 20"><path d="M2 4H18" stroke="#2f6fb5" stroke-width="2"/><rect x="7" y="1" width="6" height="3" fill="none" stroke="#2f6fb5"/><path d="M4 6H16V19H4Z" fill="#6aa3dc" stroke="#2f6fb5"/><path d="M7.500 8V17M10 8V17M12.500 8V17" stroke="#fff" stroke-width="1.100"/></svg>
            </div>
            <div class="blend">
              <div class="dd">Normal</div><span class="op">Opacity:</span><div class="opv">100%</div><div class="opb"></div>
            </div>
            <div class="list">
              <div class="rows">
                <div class="lrow">
                  <div class="e">${eye()}</div>
                  <div class="sel">
                    <div class="ln">${link("#b9d2ee")}</div>
                    <svg class="lt" viewBox="0 0 43 56"><path d="M6 36V33L9 28 11 30 13 25 15 26 17 19 19 23 20 15 22 12 24 18 26 14 28 22 30 18 32 24 34 27 36 26 39 33V36Z" fill="#555"/><path d="M7 40h4v4h-4zM16 40h4v4h-4z" fill="#2a2a2a"/><path d="M35 40h4v4h-4z" fill="#fff" stroke="#333" stroke-width=".7"/></svg>
                    <div class="chain">${link("#e5a81f")}</div>
                    <div class="mask"></div>
                    <span class="nm">Levels 1</span>
                  </div>
                </div>
                <div class="lrow bgrow">
                  <div class="e">${eye()}</div>
                  <div class="ln">${link("#555")}</div>
                  <div class="fthumb">${thumb()}</div>
                  <span class="nm">Background</span>
                  <svg class="lock" viewBox="0 0 20 20" width="18" height="18"><path d="M2 2H5V5H2ZM8 2H11V5H8ZM5 5H8V8H5ZM2 8H5V11H2Z" fill="#4b8fd6"/><rect x="1.500" y="1.500" width="10" height="10" fill="none" stroke="#7fa9d5"/><path d="M11 12V10C11 7 16 7 16 10V12" fill="none" stroke="#2f6fb5" stroke-width="1.500"/><rect x="9.500" y="12" width="8" height="7" fill="#2f6fb5"/></svg>
                </div>
              </div>
              <div class="scroll"></div>
            </div>
          </div>
          <div class="history">
            <div class="ptabs">
              <span class="on th">History</span><span class="tn">Navigator</span><span class="tc">Color Swatches</span>${pm()}
            </div>
            <div class="hbody">
              <div class="hlist">
                <div class="snap"><div class="hthumb">${thumb()}</div>floorplan.jpg</div>
                <div class="hrows">
                  <div class="hrow">${histIcon()}Open</div>
                  <div class="hrow">${histIcon()}New Levels Layer</div>
                  <div class="hrow on">${histIcon()}Modify Levels Layer</div>
                </div>
              </div>
              <div class="scroll"></div>
            </div>
          </div>
          <div class="info">
            <div class="ptabs inf">
              <span class="on ti">Info</span><span class="tm">Histogram</span>${pm()}
            </div>
            <div class="icols">
              <div><div class="dd">RGB Color</div><div class="kvs">${["R :", "G :", "B :"].map((k) => html`<div class="kv">${k}</div>`)}</div></div>
              <div><div class="dd">Web Color</div><div class="kvs">${["R :", "G :", "B :", "Idx :"].map((k) => html`<div class="kv">${k}</div>`)}</div></div>
            </div>
            <div class="idiv d1"></div>
            <div class="icols">
              <div><div class="dd">Pixels</div><div class="kvs2">${["X :", "Y :"].map((k) => html`<div class="kv">${k}</div>`)}</div></div>
              <div><div class="dimen">Dimension</div><div class="kvs2">${["W :", "H :"].map((k) => html`<div class="kv">${k}</div>`)}</div></div>
            </div>
            <div class="idiv d2">500 px x 660 px (72 ppi)</div>
          </div>
        </div>
      </div>
      <div class="bottom">
        ${BOTTOM_ITEMS.map(([k, l, s]) => html`<div class="bi ${s}"><svg viewBox="0 0 32 32">${BOTTOM[k]}</svg><label>${l}</label></div>`)}
        <div></div>
        <div class="more">
          <div class="mbtn"><svg viewBox="0 0 24 24" width="26" height="26"><rect x="1" y="3" width="22" height="18" fill="#79b1e6" stroke="#1f4f86"/><rect x="1" y="3" width="22" height="4" fill="#d0e4f6" stroke="#1f4f86" stroke-width=".5"/><rect x="10" y="3" width="13" height="4" fill="#1f5ea3"/></svg><i class="car"></i></div>
          <label>More</label>
        </div>
      </div>
    </div>

    <div class="lv">
      <div class="lvh">✕</div>
      <div class="ptabs lvt"><span class="ta">Actions</span><span class="on tv">Levels</span>${pm()}</div>
      <div class="lvb">
        <div class="chr">Channel:<div class="dd">RGB</div><div class="auto">Auto</div></div>
        <div class="hr">
          <svg class="hist" viewBox="0 0 209 99"><path d=${hist} stroke="#262626" stroke-width="1"/></svg>
          <div class="drops"><div>${dropper("#222")}</div><div>${dropper("#777")}</div><div class="on">${dropper("#fff")}</div></div>
        </div>
        <div class="track">
          ${this.thumbSvg(6, "#555", "#555")}${this.thumbSvg(106, "#999", "#888")}${this.thumbSvg(206, "#fff", "#bbb")}
        </div>
        <div class="vals"><span>0</span><span class="v1">1.00</span><span class="v2">255</span></div>
        <div class="ol">Output Levels:</div>
        <div class="gb"></div>
        <div class="track track2">${this.thumbSvg(6, "#555", "#555")}${this.thumbSvg(249, "#fff", "#999")}</div>
        <div class="vals vals2"><span>0</span><span class="v3">255</span></div>
        <div class="foot">
          <svg viewBox="0 0 20 14" width="20" height="14"><path d="M1 3H6V8" fill="none" stroke="#2f6fb5"/><path d="M3 7H9L6 11ZM6 11V14" fill="#2f6fb5"/><rect x="9.500" y="2.500" width="9" height="9" fill="#fff" stroke="#444"/></svg>
          <span class="e">${eye()}</span>
          <div class="reset">Reset</div>
        </div>
      </div>
    </div>
    <svg class="arrow" viewBox="0 0 39 16" width="39" height="16"><path d="M12 8H39" stroke="#e8141c" stroke-width="3"/><path d="M0 8L14 1 11 8 14 15Z" fill="#e8141c"/></svg>
    <div class="tip">Sample in image to set white point (press Opt to display clipping preview)</div>`;
  }

  thumbSvg(x: number, fill: string, stroke: string) {
    return html`<svg style="left:${x}px" viewBox="0 0 12 11" width="12" height="11"><path d="M1 5L6 .5 11 5V10H1Z" fill=${fill} stroke=${stroke} stroke-width="1"/></svg>`;
  }
}
